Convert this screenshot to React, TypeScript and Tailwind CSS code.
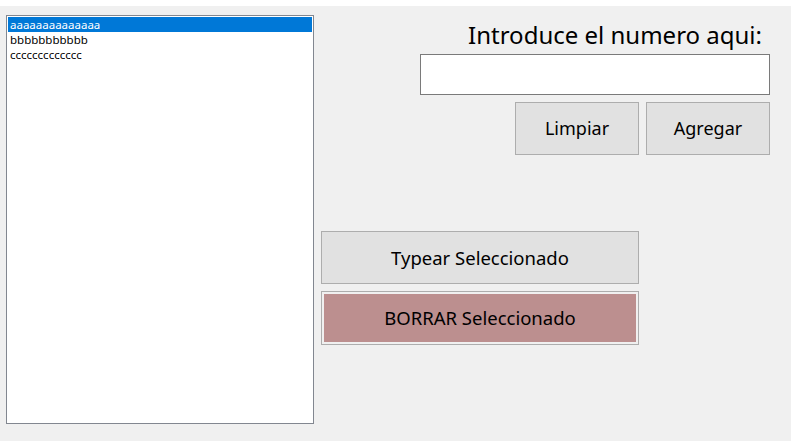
import * as React from 'react';

const items = ['aaaaaaaaaaaaaa', 'bbbbbbbbbbb', 'ccccccccccccc'];

const font = { fontFamily: '"Noto Sans", "Open Sans", sans-serif' };

export default function App() {
  const [selected, setSelected] = React.useState(0);
  const [value, setValue] = React.useState('');

  return (
    <div className="w-[791px] h-[441px] bg-white pt-[6px]" style={font}>
      <div className="flex h-[435px] bg-[#f0f0f0]">
        {/* list box */}
        <div className="ml-[6px] mt-[9px] w-[308px] h-[409px] border border-[#828790] bg-white p-px">
          {items.map((item, i) => (
            <div
              key={item}
              onClick={() => setSelected(i)}
              className={
                i === selected
                  ? 'h-[15px] pl-[2px] text-[11.5px] leading-[15px] bg-[#0078d7] text-white'
                  : 'h-[15px] pl-[2px] text-[11.5px] leading-[15px] text-black'
              }
            >
              {item}
            </div>
          ))}
        </div>

        {/* controls */}
        <div className="flex-1 flex flex-col">
          <div className="flex flex-col items-end pr-[21px] pt-[14px]">
            <label className="mr-[8px] text-[24px] leading-[30px] text-black">
              Introduce el numero aqui:
            </label>
            <input
              value={value}
              onChange={(e) => setValue(e.target.value)}
              className="mt-[4px] w-[350px] h-[41px] border border-[#7a7a7a] bg-white px-2 text-[18px] outline-none"
            />
            <div className="mt-[7px] flex gap-[7px]">
              <button
                onClick={() => setValue('')}
                className="w-[124px] h-[53px] border border-[#adadad] bg-[#e1e1e1] text-[18px] text-black"
              >
                Limpiar
              </button>
              <button className="w-[124px] h-[53px] border border-[#adadad] bg-[#e1e1e1] text-[18px] text-black">
                Agregar
              </button>
            </div>
          </div>

          <div className="ml-[7px] mt-[76px] flex flex-col gap-[7px]">
            <button className="w-[318px] h-[53px] border border-[#adadad] bg-[#e1e1e1] text-[18.5px] text-black">
              Typear Seleccionado
            </button>
            <button className="w-[318px] h-[54px] border border-[#adadad] bg-[#f0f0f0] p-[2px]">
              <span className="flex h-full w-full items-center justify-center bg-[#bc8f8f] text-[18.5px] text-black">
                BORRAR Seleccionado
              </span>
            </button>
          </div>
        </div>
      </div>
    </div>
  );
}
